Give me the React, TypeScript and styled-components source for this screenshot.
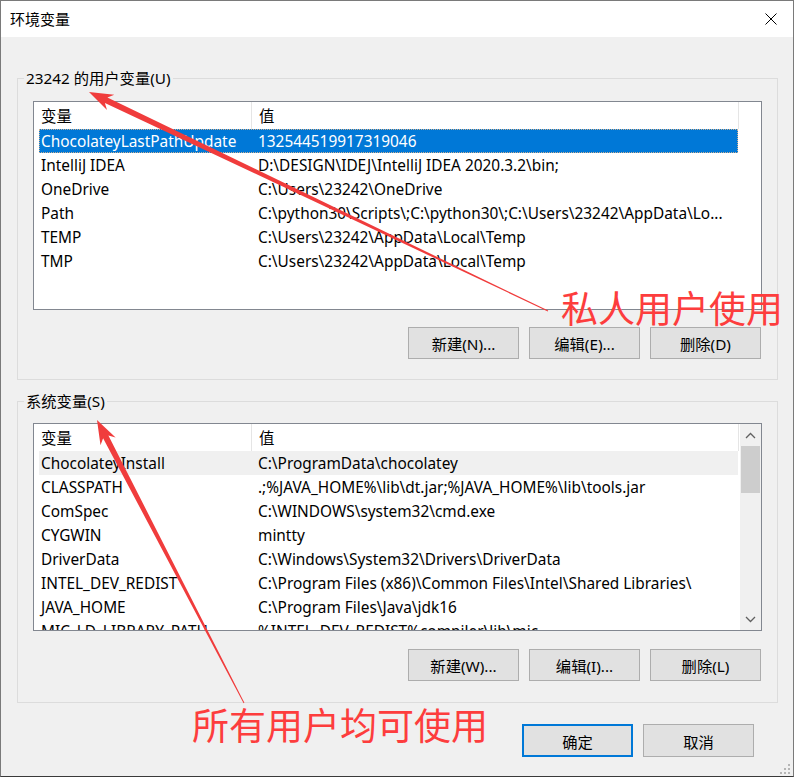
import React from 'react';
import styled, { createGlobalStyle } from 'styled-components';

const GlobalStyle = createGlobalStyle`
  html, body { margin: 0; padding: 0; background: #ffffff; }
  body { font-family: "Noto Sans", "Noto Sans CJK SC", sans-serif; }
`;

const UI_FONT = `"Noto Sans", "Noto Sans CJK SC", sans-serif`;
const CJK_FONT = `"Noto Sans CJK SC", "Noto Sans", sans-serif`;

const Window = styled.div`
  position: relative;
  width: 794px;
  height: 777px;
  box-sizing: border-box;
  border: 1px solid #7a7a7a;
  border-bottom-color: #3a3a3a;
  background: #f0f0f0;
  display: flex;
  flex-direction: column;
  font-family: ${UI_FONT};
  font-size: 15.4px;
  color: #000;
  overflow: hidden;
`;

const TitleBar = styled.div`
  height: 36px;
  flex: none;
  background: #ffffff;
  display: flex;
  align-items: center;
  justify-content: space-between;
  padding: 0 16px 0 9px;
`;

const Title = styled.span`
  font-family: ${CJK_FONT};
  font-size: 15px;
  line-height: 20px;
`;

const CloseIcon = styled.svg`
  width: 12px;
  height: 12px;
  display: block;
`;

const Group = styled.fieldset<{ $top: number; $bottom: number }>`
  margin: ${(p) => p.$top}px 15px 0 16px;
  padding: 0 15px ${(p) => p.$bottom}px 15px;
  border: 1px solid #dcdcdc;
  min-width: 0;
  display: flex;
  flex-direction: column;
`;

const Legend = styled.legend`
  padding: 0 2px;
  margin-left: -9px;
  height: 20px;
  line-height: 20px;
  font-size: 15.3px;
  font-family: ${UI_FONT};
`;

const ListView = styled.div<{ $height: number; $gap: number }>`
  margin-top: ${(p) => p.$gap}px;
  height: ${(p) => p.$height}px;
  box-sizing: border-box;
  border: 1px solid #828790;
  background: #ffffff;
  display: flex;
  overflow: hidden;
`;

const ListMain = styled.div`
  flex: 1;
  min-width: 0;
  display: flex;
  flex-direction: column;
  overflow: hidden;
`;

const Header = styled.div`
  height: 27px;
  flex: none;
  display: flex;
`;

const HeaderCell = styled.div<{ $width: number }>`
  width: ${(p) => p.$width}px;
  flex: none;
  box-sizing: border-box;
  border-right: 1px solid #e5e5e5;
  padding-left: 7px;
  display: flex;
  align-items: center;
  white-space: nowrap;
`;

const Row = styled.div<{ $state?: 'active' | 'inactive' }>`
  margin-left: 5px;
  width: 699px;
  height: 24px;
  flex: none;
  box-sizing: border-box;
  display: flex;
  align-items: center;
  background: ${(p) =>
    p.$state === 'active' ? '#0078d7' : p.$state === 'inactive' ? '#f0f0f0' : 'transparent'};
  color: ${(p) => (p.$state === 'active' ? '#ffffff' : '#000000')};
  outline: ${(p) => (p.$state === 'active' ? '1px dotted rgba(255, 190, 130, 0.8)' : 'none')};
  outline-offset: -1px;
`;

const Cell = styled.div<{ $first?: boolean }>`
  width: ${(p) => (p.$first ? '212px' : '487px')};
  flex: none;
  box-sizing: border-box;
  padding-left: ${(p) => (p.$first ? '2px' : '7px')};
  white-space: nowrap;
  overflow: hidden;
  text-overflow: ellipsis;
`;

const Scrollbar = styled.div`
  width: 21px;
  flex: none;
  background: #f0f0f0;
  display: flex;
  flex-direction: column;
`;

const ScrollArrow = styled.div`
  height: 22px;
  flex: none;
  display: flex;
  align-items: center;
  justify-content: center;
`;

const ScrollThumb = styled.div`
  height: 47px;
  margin: 0 1px;
  flex: none;
  background: #cdcdcd;
`;

const ScrollTrack = styled.div`
  flex: 1;
`;

const ButtonRow = styled.div<{ $gap: number }>`
  margin-top: ${(p) => p.$gap}px;
  display: flex;
  justify-content: flex-end;
  gap: 10px;
  padding-right: 1px;
`;

const Button = styled.button<{ $default?: boolean; $height?: number }>`
  width: 111px;
  height: ${(p) => p.$height ?? 32}px;
  box-sizing: border-box;
  background: #e1e1e1;
  border: ${(p) => (p.$default ? '2px solid #0078d7' : '1px solid #adadad')};
  font-family: ${UI_FONT};
  font-size: 15.3px;
  color: #000;
  padding: 0;
  display: flex;
  align-items: center;
  justify-content: center;
`;

const Footer = styled.div`
  margin-top: 21px;
  display: flex;
  justify-content: flex-end;
  gap: 10px;
  padding-right: 39px;
`;

const Annotation = styled.div<{ $left: number; $top: number }>`
  position: absolute;
  left: ${(p) => p.$left}px;
  top: ${(p) => p.$top}px;
  font-family: ${CJK_FONT};
  font-size: 37px;
  line-height: 37px;
  color: #fd3d3d;
  white-space: nowrap;
  pointer-events: none;
`;

const Overlay = styled.svg`
  position: absolute;
  left: -1px;
  top: -1px;
  width: 794px;
  height: 777px;
  pointer-events: none;
`;

const Grip = styled.svg`
  position: absolute;
  right: 2px;
  bottom: 1px;
  width: 12px;
  height: 12px;
`;

const userVars: [string, string][] = [
  ['ChocolateyLastPathUpdate', '132544519917319046'],
  ['IntelliJ IDEA', 'D:\\DESIGN\\IDEJ\\IntelliJ IDEA 2020.3.2\\bin;'],
  ['OneDrive', 'C:\\Users\\23242\\OneDrive'],
  ['Path', 'C:\\python30\\Scripts\\;C:\\python30\\;C:\\Users\\23242\\AppData\\Lo...'],
  ['TEMP', 'C:\\Users\\23242\\AppData\\Local\\Temp'],
  ['TMP', 'C:\\Users\\23242\\AppData\\Local\\Temp'],
];

const sysVars: [string, string][] = [
  ['ChocolateyInstall', 'C:\\ProgramData\\chocolatey'],
  ['CLASSPATH', '.;%JAVA_HOME%\\lib\\dt.jar;%JAVA_HOME%\\lib\\tools.jar'],
  ['ComSpec', 'C:\\WINDOWS\\system32\\cmd.exe'],
  ['CYGWIN', 'mintty'],
  ['DriverData', 'C:\\Windows\\System32\\Drivers\\DriverData'],
  ['INTEL_DEV_REDIST', 'C:\\Program Files (x86)\\Common Files\\Intel\\Shared Libraries\\'],
  ['JAVA_HOME', 'C:\\Program Files\\Java\\jdk16'],
  ['MIC_LD_LIBRARY_PATH', '%INTEL_DEV_REDIST%compiler\\lib\\mic'],
];

function arrowPoints(
  tx: number, ty: number, hx: number, hy: number,
  tailW: number, shaftW: number, headLen: number, headW: number
) {
  const dx = hx - tx;
  const dy = hy - ty;
  const L = Math.hypot(dx, dy);
  const ux = dx / L;
  const uy = dy / L;
  const nx = -uy;
  const ny = ux;
  const bx = hx - ux * headLen;
  const by = hy - uy * headLen;
  const nb = hx - ux * (headLen - 5);
  const nby = hy - uy * (headLen - 5);
  const pts = [
    [tx + (nx * tailW) / 2, ty + (ny * tailW) / 2],
    [nb + (nx * shaftW) / 2, nby + (ny * shaftW) / 2],
    [bx + (nx * headW) / 2, by + (ny * headW) / 2],
    [hx, hy],
    [bx - (nx * headW) / 2, by - (ny * headW) / 2],
    [nb - (nx * shaftW) / 2, nby - (ny * shaftW) / 2],
    [tx - (nx * tailW) / 2, ty - (ny * tailW) / 2],
  ];
  return pts.map((p) => `${p[0].toFixed(1)},${p[1].toFixed(1)}`).join(' ');
}

function Chevron({ up }: { up?: boolean }) {
  return (
    <svg width="11" height="7" viewBox="0 0 11 7">
      <polyline
        points={up ? '1,6 5.5,1.5 10,6' : '1,1 5.5,5.5 10,1'}
        fill="none"
        stroke="#606060"
        strokeWidth="1.3"
      />
    </svg>
  );
}

function VarList({
  rows,
  height,
  gap,
  scroll,
  firstState,
}: {
  rows: [string, string][];
  height: number;
  gap: number;
  scroll?: boolean;
  firstState: 'active' | 'inactive';
}) {
  return (
    <ListView $height={height} $gap={gap}>
      <ListMain>
        <Header>
          <HeaderCell $width={218}>变量</HeaderCell>
          <HeaderCell $width={487}>值</HeaderCell>
        </Header>
        {rows.map(([k, v], i) => (
          <Row key={k} $state={i === 0 ? firstState : undefined}>
            <Cell $first>{k}</Cell>
            <Cell>{v}</Cell>
          </Row>
        ))}
      </ListMain>
      {scroll && (
        <Scrollbar>
          <ScrollArrow>
            <Chevron up />
          </ScrollArrow>
          <ScrollThumb />
          <ScrollTrack />
          <ScrollArrow>
            <Chevron />
          </ScrollArrow>
        </Scrollbar>
      )}
    </ListView>
  );
}

export default function App() {
  return (
    <>
      <GlobalStyle />
      <Window>
        <TitleBar>
          <Title>环境变量</Title>
          <CloseIcon viewBox="0 0 12 12">
            <line x1="0.5" y1="0.5" x2="11.5" y2="11.5" stroke="#000" strokeWidth="1" />
            <line x1="11.5" y1="0.5" x2="0.5" y2="11.5" stroke="#000" strokeWidth="1" />
          </CloseIcon>
        </TitleBar>

        <Group $top={31} $bottom={20}>
          <Legend>23242 的用户变量(U)</Legend>
          <VarList rows={userVars} height={209} gap={13} firstState="active" />
          <ButtonRow $gap={17}>
            <Button>新建(N)...</Button>
            <Button>编辑(E)...</Button>
            <Button>删除(D)</Button>
          </ButtonRow>
        </Group>

        <Group $top={11} $bottom={21}>
          <Legend>系统变量(S)</Legend>
          <VarList rows={sysVars} height={208} gap={12} scroll firstState="inactive" />
          <ButtonRow $gap={18}>
            <Button>新建(W)...</Button>
            <Button>编辑(I)...</Button>
            <Button>删除(L)</Button>
          </ButtonRow>
        </Group>

        <Footer>
          <Button $default $height={33}>确定</Button>
          <Button $height={33}>取消</Button>
        </Footer>

        <Overlay viewBox="0 0 794 777">
          <polygon points={arrowPoints(548, 311, 89, 92, 0.8, 6, 24, 17)} fill="#f03c3c" />
          <polygon points={arrowPoints(244, 703, 97, 420, 0.8, 6, 24, 17)} fill="#f03c3c" />
        </Overlay>

        <Annotation $left={560} $top={288}>私人用户使用</Annotation>
        <Annotation $left={191} $top={705}>所有用户均可使用</Annotation>

        <Grip viewBox="0 0 12 12">
          <rect x="9" y="1" width="2" height="2" fill="#b5b5b5" />
          <rect x="5" y="5" width="2" height="2" fill="#b5b5b5" />
          <rect x="9" y="5" width="2" height="2" fill="#b5b5b5" />
          <rect x="1" y="9" width="2" height="2" fill="#b5b5b5" />
          <rect x="5" y="9" width="2" height="2" fill="#b5b5b5" />
          <rect x="9" y="9" width="2" height="2" fill="#b5b5b5" />
        </Grip>
      </Window>
    </>
  );
}
